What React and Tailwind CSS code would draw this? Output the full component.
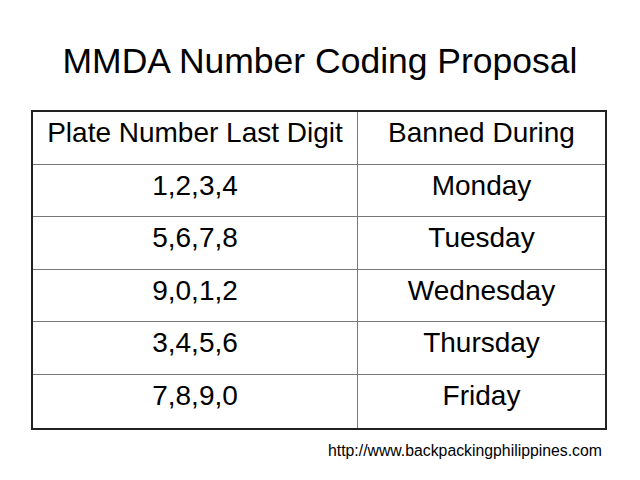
const rows = [
  ['1,2,3,4', 'Monday'],
  ['5,6,7,8', 'Tuesday'],
  ['9,0,1,2', 'Wednesday'],
  ['3,4,5,6', 'Thursday'],
  ['7,8,9,0', 'Friday'],
];

const Cell = ({ children, left }) => (
  <div
    className={`flex justify-center pt-[7px] text-[28px] leading-[28px] ${left ? 'border-r border-[#777]' : ''}`}
  >
    {children}
  </div>
);

const App = () => {
  return (
    <div className="w-[640px] h-[480px] bg-white text-black overflow-hidden font-['Liberation_Sans',Arial,sans-serif]">
      <h1 className="pt-[41px] h-[110px] text-center text-[35.5px] leading-[40px]">MMDA Number Coding Proposal</h1>

      <div className="ml-[31px] w-[576px] border-2 border-[#222]">
        {[['Plate Number Last Digit', 'Banned During'], ...rows].map(([a, b], i) => (
          <div
            key={b}
            className={`grid grid-cols-[325px_1fr] h-[52.6px] ${i < rows.length ? 'border-b border-[#777]' : ''}`}
          >
            <Cell left>{a}</Cell>
            <Cell>{b}</Cell>
          </div>
        ))}
      </div>

      <div className="ml-[328px] mt-[12px] text-[15.8px] leading-[18px]">http://www.backpackingphilippines.com</div>
    </div>
  );
};

export default App;
